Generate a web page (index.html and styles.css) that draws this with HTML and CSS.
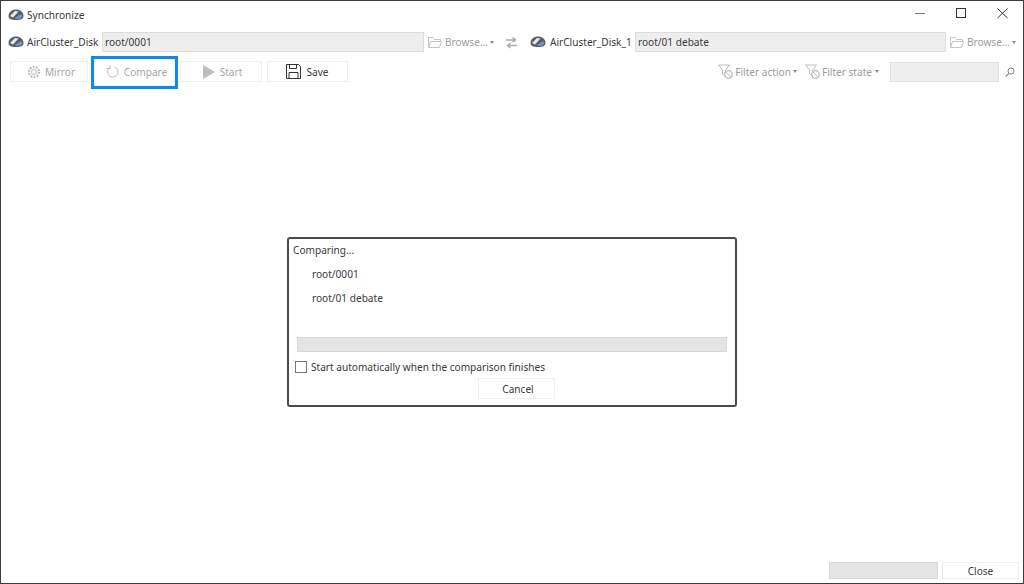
FILE: index.html
```html
<!DOCTYPE html>
<html lang="en">
<head>
<meta charset="utf-8">
<title>Synchronize</title>
<link rel="stylesheet" href="styles.css">
</head>
<body>
<svg class="defs" width="0" height="0" aria-hidden="true">
  <defs>
    <symbol id="disk" viewBox="0 0 16 14">
      <path d="M.5 8C.5 4 4 1.500 8 1.500s7.500 2.500 7.500 6.500c0 3-3 4-7.500 4S.5 11 .5 8Z" fill="#5a5f66"/>
      <path d="M2 8 7 3l3.500.5L5 9.500Z" fill="#e6e9ec"/>
      <path d="M7 10 13 6l1.500 2.500L12 10.500 8 11Z" fill="#6a9ccc"/>
    </symbol>
    <symbol id="folder" viewBox="0 0 14 13">
      <path d="M.5 11.500V1.500h4.500l1.500 2h6v2 M.5 11.500l2-6h11l-2 6Z" fill="none" stroke="#c4c4c4"/>
    </symbol>
    <symbol id="filter" viewBox="0 0 15 15">
      <path d="M.5 1h11L7.500 6v6L4.500 10V6Z" fill="none" stroke="#bdbdbd"/>
      <circle cx="10.500" cy="10.500" r="3.800" fill="#fff" stroke="#bdbdbd" stroke-width="1.300"/>
      <path d="M8 8l5 5" stroke="#bdbdbd"/>
    </symbol>
  </defs>
</svg>
<div class="window">
  <header class="titlebar">
    <svg class="ico-disk"><use href="#disk"/></svg>
    <span class="title">Synchronize</span>
    <div class="winbtns">
      <svg class="winbtn" viewBox="0 0 41 27"><path d="M15 12.500h10" stroke="#777" fill="none"/></svg>
      <svg class="winbtn" viewBox="0 0 41 27"><rect x="15.500" y="7.500" width="9" height="9" stroke="#333" fill="none"/></svg>
      <svg class="winbtn" viewBox="0 0 41 27"><path d="M15.500 7.500l10 9.500M25.500 7.500l-10 9.500" stroke="#333" fill="none"/></svg>
    </div>
  </header>

  <div class="pathrow">
    <svg class="ico-disk"><use href="#disk"/></svg>
    <span class="disklabel label-left">AirCluster_Disk</span>
    <div class="field path-left">root/0001</div>
    <svg class="ico-folder"><use href="#folder"/></svg>
    <span class="muted browse">Browse...</span>
    <i class="caret"></i>
    <svg class="swap" viewBox="0 0 13 13"><path d="M1 4h9.500M7.500 1.500 10.500 4 7.500 6M12 9.500H2.500M5.500 7 2.500 9.500l3 2.500" fill="none" stroke="#aaa" stroke-width="1.500"/></svg>
    <svg class="ico-disk"><use href="#disk"/></svg>
    <span class="disklabel label-right">AirCluster_Disk_1</span>
    <div class="field path-right">root/01 debate</div>
    <svg class="ico-folder"><use href="#folder"/></svg>
    <span class="muted browse">Browse...</span>
    <i class="caret"></i>
  </div>

  <div class="toolbar">
    <button class="btn btn-mirror muted" type="button">
      <svg class="ico" viewBox="0 0 14 14"><circle cx="7" cy="7" r="2.500" fill="none" stroke="#bbb"/><circle cx="7" cy="7" r="5" fill="none" stroke="#bbb" stroke-width="2.400" stroke-dasharray="1.800 1.300"/></svg>
      Mirror
    </button>
    <button class="btn btn-compare muted" type="button">
      <svg class="ico" viewBox="0 0 14 14"><path d="M4 2.500A5.200 5.200 0 1 0 8.500 2" fill="none" stroke="#bbb"/><path d="M4.500 0v3.500H1" fill="none" stroke="#bbb" transform="translate(-.5 0)"/></svg>
      Compare
    </button>
    <button class="btn btn-start muted" type="button">
      <svg class="ico" viewBox="0 0 14 14"><path d="M1 0l12 7-12 7Z" fill="#bdbdbd"/></svg>
      Start
    </button>
    <button class="btn btn-save" type="button">
      <svg class="ico" viewBox="0 0 15 15"><path d="M.5.500h12l2 2v12H.5Z M3.500.500v4h7v-4M3 14.500v-6h9v6" fill="none" stroke="#333"/></svg>
      Save
    </button>
    <div class="filters">
      <svg class="ico-filter"><use href="#filter"/></svg>
      <span class="muted">Filter action</span>
      <i class="caret caret-tight"></i>
      <svg class="ico-filter second"><use href="#filter"/></svg>
      <span class="muted">Filter state</span>
      <i class="caret"></i>
      <div class="search"></div>
      <svg class="magnifier" viewBox="0 0 10 10"><circle cx="6" cy="4" r="3" fill="none" stroke="#888"/><path d="M4 6.300.8 9.500" stroke="#888" stroke-width="1.200"/></svg>
    </div>
  </div>

  <main class="main">
    <section class="dialog">
      <div class="d-title">Comparing...</div>
      <div class="d-path">root/0001</div>
      <div class="d-path">root/01 debate</div>
      <div class="progress"></div>
      <label class="check"><span class="box"></span>Start automatically when the comparison finishes</label>
      <button class="btn btn-cancel" type="button">Cancel</button>
    </section>
  </main>

  <footer class="footer">
    <div class="footprogress"></div>
    <button class="btn btn-close" type="button">Close</button>
  </footer>
</div>
</body>
</html>
```

FILE: styles.css
```css
* { box-sizing: border-box; }
html, body { margin: 0; height: 100%; background: #fff; }
body {
  font-family: "Noto Sans", "Open Sans", "Liberation Sans", sans-serif;
  font-size: 10.1px;
  color: #3a3a3a;
  overflow: hidden;
}
.defs { position: absolute; }
.window {
  width: 1024px;
  height: 584px;
  border: 1px solid #3c3c3c;
  display: flex;
  flex-direction: column;
}
.titlebar {
  height: 27px;
  display: flex;
  align-items: center;
  padding-left: 7px;
  flex: none;
  margin-bottom: 4px;
}
.ico-disk { width: 16px; height: 14px; flex: none; }
.title { margin-left: 3px; }
.winbtns { margin-left: auto; display: flex; }
.winbtn { width: 41px; height: 27px; display: block; }

.pathrow {
  height: 20px;
  display: flex;
  align-items: center;
  padding-left: 7px;
  flex: none;
}
.disklabel { margin-left: 3px; white-space: nowrap; }
.label-left { width: 72px; }
.label-right { width: 82px; margin-left: 4px; }
.field {
  height: 20px;
  line-height: 19px;
  background: #eee;
  border: 1px solid #dcdcdc;
  padding-left: 2px;
  margin-left: 3px;
  flex: none;
}
.path-left { width: 322px; }
.path-right { width: 311px; }
.ico-folder { width: 14px; height: 13px; margin-left: 4px; flex: none; }
.browse { margin-left: 3px; width: 42px; white-space: nowrap; }
.muted { color: #9c9c9c; }
.caret {
  width: 0; height: 0;
  margin-left: 3px;
  border: 2.500px solid transparent;
  border-top: 3px solid #888;
  border-bottom: 0;
  flex: none;
}
.caret-tight { margin-left: 2px; }
.swap { width: 13px; height: 13px; margin: 0 12px 0 11px; flex: none; }

.toolbar {
  height: 21px;
  margin-top: 9px;
  display: flex;
  align-items: center;
  padding-left: 9px;
  flex: none;
}
.btn {
  font: inherit;
  height: 21px;
  background: #fff;
  border: 1px solid #efefef;
  display: flex;
  align-items: center;
  justify-content: center;
  gap: 4px;
  padding: 0;
  color: #3a3a3a;
  flex: none;
}
.btn.muted { color: #a6a6a6; padding-left: 4px; }
.ico { width: 14px; height: 14px; flex: none; }
.btn-mirror { width: 78px; }
.btn-compare { width: 81px; margin: 2px 0 0 6px; outline: 3px solid #0f8ae8; height: 27px; padding-bottom: 2px; }
.btn.btn-start { width: 82px; margin-left: 5px; padding-left: 2px; }
.btn-save { width: 81px; margin-left: 5px; gap: 5px; }
.btn-save .ico { width: 15px; height: 15px; }
.filters { margin-left: auto; display: flex; align-items: center; padding-right: 8px; }
.ico-filter { width: 15px; height: 15px; margin-right: 2px; flex: none; }
.ico-filter.second { margin-left: 8px; }
.search {
  width: 109px;
  height: 20px;
  margin-left: 11px;
  background: #eee;
  border: 1px solid #e2e2e2;
}
.magnifier { width: 10px; height: 10px; margin-left: 6px; flex: none; }

.main {
  flex: 1;
  display: flex;
  align-items: center;
  justify-content: center;
}
.dialog {
  width: 450px;
  height: 170px;
  border: 2px solid #4a4a4a;
  border-radius: 3px;
  background: #fff;
  padding: 3px 8px 0 4px;
  display: flex;
  flex-direction: column;
}
.d-title { height: 16px; line-height: 16px; }
.d-path { height: 16px; line-height: 16px; margin: 8px 0 0 19px; }
.progress {
  height: 15px;
  background: #e4e4e4;
  border: 1px solid #d8d8d8;
  margin: 31px 0 0 4px;
  flex: none;
}
.check {
  display: flex;
  align-items: center;
  height: 16px;
  margin: 7px 0 0 2px;
}
.box {
  width: 12px;
  height: 12px;
  border: 1px solid #777;
  background: #fff;
  margin-right: 4px;
  flex: none;
}
.btn-cancel { width: 77px; height: 21px; margin: 3px auto 0; padding-left: 4px; align-self: center; position: relative; left: 6px; }

.footer {
  display: flex;
  justify-content: flex-end;
  align-items: center;
  gap: 4px;
  height: 17px;
  margin-bottom: 4px;
  padding-right: 4px;
  flex: none;
}
.footprogress { width: 109px; height: 17px; background: #e4e4e4; border: 1px solid #d8d8d8; }
.btn-close { width: 77px; height: 17px; }
```
